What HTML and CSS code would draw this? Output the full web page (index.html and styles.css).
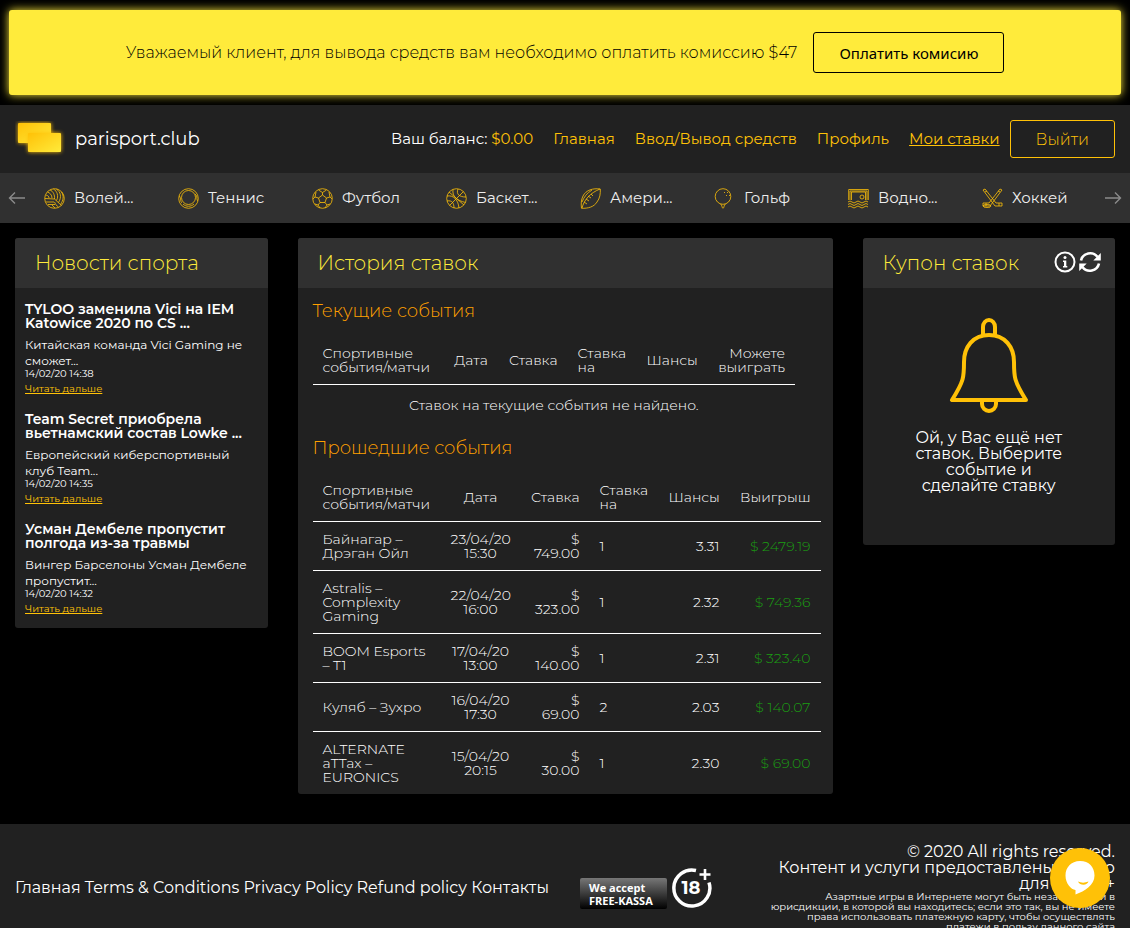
FILE: index.html
```html
<!DOCTYPE html>
<html lang="ru">
  <head>
    <meta charset="UTF-8" />
    <meta name="viewport" content="width=device-width, initial-scale=1.0" />
    <title>parisport.club</title>
    <link rel="stylesheet" href="styles.css">
  </head>
  <body>
    <div class="notice">
      <span class="notice-text">Уважаемый клиент, для вывода средств вам необходимо оплатить комиссию $47</span>
      <button type="button" class="notice-button">Оплатить комисию</button>
    </div>

    <header class="header">
      <a href="#" class="logo">
        <svg width="50" height="36" viewBox="0 0 50 36">
          <defs>
            <linearGradient id="gold" x1="0" y1="0" x2="1" y2="1">
              <stop offset="0" stop-color="#ffc107" />
              <stop offset="1" stop-color="#ffeb3b" />
            </linearGradient>
          </defs>
          <g fill="url(#gold)" class="logo-cards">
            <rect x="3" y="2" width="33" height="20" rx="1" />
            <rect x="13" y="12" width="33" height="19" rx="1" />
          </g>
        </svg>
        <span>parisport.club</span>
      </a>
      <nav class="menu">
        <span class="balance">Ваш баланс: <b>$0.00</b></span>
        <a href="#">Главная</a>
        <a href="#">Ввод/Вывод средств</a>
        <a href="#">Профиль</a>
        <a href="#" class="active">Мои ставки</a>
        <button type="button" class="logout">Выйти</button>
      </nav>
    </header>

    <nav class="sports">
      <button type="button" class="arrow prev" aria-label="Назад">
        <svg width="18" height="14" viewBox="0 0 18 14"><path d="M17 7H1.500M7 1.500L1.500 7l5.500 5.500" /></svg>
      </button>
      <a href="#" class="sport">
        <svg viewBox="0 0 21 21"><circle cx="10.500" cy="10.500" r="9.800" /><path d="M10.500 11L1 10.500M10.500 11l7 6.500M10.500 11C11 7 9 3 6 2M10 14H2M11 16.500H4M8 10C8 7 6 5 3.500 4M5 10C5 8.500 4 7.500 2 7M12.500 12.500C15 8 13 3 9.500 1M14.500 14.500C18 9 16.500 4 12.500 1M16.500 16.500C19.500 12 20 8 17.500 4M10.500 14c1 2 2 4 4 5M8 17c1 1 2 2 3 3" /></svg>
        <span>Волей...</span>
      </a>
      <a href="#" class="sport">
        <svg viewBox="0 0 21 21"><circle cx="10.500" cy="10.500" r="9.800" /><circle cx="10.500" cy="9.500" r="7" /><path d="M1 8c2 0 1 6 3 7M5 16c3 3 8 3 11 0M17 6c3 2 1 6 3 7" /></svg>
        <span>Теннис</span>
      </a>
      <a href="#" class="sport">
        <svg viewBox="0 0 21 21"><circle cx="10.500" cy="10.500" r="9.800" /><path d="M6.500 2l4 2.500 4-2.500M10.500 7l4 3-1.500 4.500H8L6.500 10zM10.500 7V4.500M6.500 10L3 9 1 11M3 9L4 4M14.500 10L18 9l2 2M18 9l-1-5M8 14.500L6 17l-3-1M6 17l2 3M13 14.500l2 2.500 3-1M15 17l-2 3" /></svg>
        <span>Футбол</span>
      </a>
      <a href="#" class="sport">
        <svg viewBox="0 0 21 21"><circle cx="10.500" cy="10.500" r="9.800" /><path d="M3 4l15 13M17.500 3.500L3.500 17.500M7 1.500c-1 7 4 11 12.500 13M1 8c6-1 11 3 12 12M12 1c-2 5 1 8 8 8M1 13c5-1 7 2 7 7" /></svg>
        <span>Баскет...</span>
      </a>
      <a href="#" class="sport">
        <svg viewBox="0 0 21 21"><path d="M20.300 1C13 0 6 2 3 8c-2 4-2 8-1.500 12.300C8 20.500 14 19 17 14c3-4 3.500-8 3.300-13zM2 20C4 12 10 5 20 1M4 14l3 2M6 11l3 2M8 8l3 2M11 6l2 2M2 14c2-5 5-9 10-12" /></svg>
        <span>Амери...</span>
      </a>
      <a href="#" class="sport">
        <svg viewBox="0 0 21 21"><circle cx="9" cy="8.500" r="7.800" /><path d="M6.500 16c2 1 1 4 2.500 4.300 1.500-.300.500-3.300 2.500-4.300M10 4l1 1M13 4l1 1M12 7l1 1M15 7l1 1" /></svg>
        <span>Гольф</span>
      </a>
      <a href="#" class="sport">
        <svg viewBox="0 0 21 21"><path d="M.700 12V1.500h19.600V12M3.500 12V4h14v8M2 12V3h17v9" /><circle cx="14" cy="9" r="2" /><path d="M0 14q2-2 4 0t4 0 4 0 4 0 4 0M0 16.500q2-2 4 0t4 0 4 0 4 0 4 0M0 19q2-2 4 0t4 0 4 0 4 0 4 0" /></svg>
        <span>Водно...</span>
      </a>
      <a href="#" class="sport">
        <svg viewBox="0 0 21 21"><path d="M1 2l2-1 11 14h6v3h-7L1 2zM20 2l-2-1L7 15H1v3h7L20 2zM3 4l2-1M18 4l-2-1M4 15v3M17 15v3" /><ellipse cx="5" cy="18" rx="4" ry="1.500" /></svg>
        <span>Хоккей</span>
      </a>
      <button type="button" class="arrow next" aria-label="Вперёд">
        <svg width="18" height="14" viewBox="0 0 18 14"><path d="M1 7H16.500M11 1.500l5.500 5.500-5.500 5.500" /></svg>
      </button>
    </nav>

    <main class="row">
      <aside class="col-side">
        <section class="panel">
          <div class="panel-head"><h2>Новости спорта</h2></div>
          <div class="news">
            <article class="news-item">
              <h3>TYLOO заменила Vici на IEM Katowice 2020 по CS ...</h3>
              <p>Китайская команда Vici Gaming не сможет...</p>
              <time>14/02/20 14:38</time>
              <a href="#">Читать дальше</a>
            </article>
            <article class="news-item">
              <h3>Team Secret приобрела вьетнамский состав Lowke ...</h3>
              <p>Европейский киберспортивный клуб Team...</p>
              <time>14/02/20 14:35</time>
              <a href="#">Читать дальше</a>
            </article>
            <article class="news-item">
              <h3>Усман Дембеле пропустит полгода из-за травмы</h3>
              <p>Вингер Барселоны Усман Дембеле пропустит...</p>
              <time>14/02/20 14:32</time>
              <a href="#">Читать дальше</a>
            </article>
          </div>
        </section>
      </aside>

      <div class="col-main">
        <section class="panel">
          <div class="panel-head"><h2>История ставок</h2></div>
          <div class="bets">
            <h3>Текущие события</h3>
            <table class="current">
              <thead>
                <tr>
                  <th class="name">Спортивные события/матчи</th>
                  <th class="date">Дата</th>
                  <th class="stake">Ставка</th>
                  <th class="pick">Ставка на</th>
                  <th class="odds">Шансы</th>
                  <th class="win">Можете выиграть</th>
                </tr>
              </thead>
              <tbody>
                <tr><td colspan="6" class="empty">Ставок на текущие события не найдено.</td></tr>
              </tbody>
            </table>

            <h3>Прошедшие события</h3>
            <table class="past">
              <thead>
                <tr>
                  <th class="name">Спортивные события/матчи</th>
                  <th class="date">Дата</th>
                  <th class="stake">Ставка</th>
                  <th class="pick">Ставка на</th>
                  <th class="odds">Шансы</th>
                  <th class="win">Выигрыш</th>
                </tr>
              </thead>
              <tbody>
                <tr>
                  <td class="name">Байнагар – Дрэган Ойл</td>
                  <td class="date">23/04/20 15:30</td>
                  <td class="stake">$ 749.00</td>
                  <td class="pick">1</td>
                  <td class="odds">3.31</td>
                  <td class="win">$ 2479.19</td>
                </tr>
                <tr>
                  <td class="name">Astralis – Complexity Gaming</td>
                  <td class="date">22/04/20 16:00</td>
                  <td class="stake">$ 323.00</td>
                  <td class="pick">1</td>
                  <td class="odds">2.32</td>
                  <td class="win">$ 749.36</td>
                </tr>
                <tr>
                  <td class="name">BOOM Esports – T1</td>
                  <td class="date">17/04/20 13:00</td>
                  <td class="stake">$ 140.00</td>
                  <td class="pick">1</td>
                  <td class="odds">2.31</td>
                  <td class="win">$ 323.40</td>
                </tr>
                <tr>
                  <td class="name">Куляб – Зухро</td>
                  <td class="date">16/04/20 17:30</td>
                  <td class="stake">$<br />69.00</td>
                  <td class="pick">2</td>
                  <td class="odds">2.03</td>
                  <td class="win">$ 140.07</td>
                </tr>
                <tr>
                  <td class="name">ALTERNATE aTTax – EURONICS</td>
                  <td class="date">15/04/20 20:15</td>
                  <td class="stake">$<br />30.00</td>
                  <td class="pick">1</td>
                  <td class="odds">2.30</td>
                  <td class="win">$ 69.00</td>
                </tr>
              </tbody>
            </table>
          </div>
        </section>
      </div>

      <aside class="col-side">
        <section class="panel">
          <div class="panel-head">
            <h2>Купон ставок</h2>
            <div class="tools">
              <button type="button" aria-label="Информация">
                <svg width="22" height="22" viewBox="0 0 22 22">
                  <circle cx="11" cy="11" r="9.500" fill="none" stroke="#fff" stroke-width="2" />
                  <circle cx="11" cy="6.500" r="1.500" fill="#fff" />
                  <path d="M9 9.500h3.300v5.500h1V16.500H9V15h1v-4H9z" fill="#fff" />
                </svg>
              </button>
              <button type="button" aria-label="Обновить">
                <svg width="22" height="22" viewBox="0 0 22 22">
                  <path d="M2 9.500A9.300 9.300 0 0 1 18.500 6M20 12.500A9.300 9.300 0 0 1 3.500 16" fill="none" stroke="#fff" stroke-width="2.600" />
                  <path d="M21.800 2v7.500h-7.500zM.200 20v-7.500h7.500z" fill="#fff" />
                </svg>
              </button>
            </div>
          </div>
          <div class="coupon">
            <svg width="80" height="96" viewBox="0 0 80 96" fill="none" stroke="#ffc107" stroke-width="4" stroke-linejoin="round">
              <path d="M34 17V9a6 7 0 0 1 12 0v8" />
              <path d="M40 17C24 17 15 29 15 44c0 15 0 19-12 38h74C65 63 65 59 65 44 65 29 56 17 40 17z" />
              <path d="M33 83v3a7 7 0 0 0 14 0v-3" />
            </svg>
            <p>Ой, у Вас ещё нет ставок. Выберите событие и сделайте ставку</p>
          </div>
        </section>
      </aside>
    </main>

    <footer class="footer">
      <div class="footer-links">
        <a href="#">Главная</a>
        <a href="#">Terms &amp; Conditions</a>
        <a href="#">Privacy Policy</a>
        <a href="#">Refund policy</a>
        <a href="#">Контакты</a>
      </div>
      <div class="badges">
        <a href="#" class="kassa"><span>We accept</span><span>FREE-KASSA</span></a>
        <svg width="42" height="42" viewBox="0 0 42 42">
          <path d="M25 3.500A18 18 0 1 0 38 15.500" fill="none" stroke="#fff" stroke-width="3.500" />
          <path d="M34 2v11M28.500 7.500h11" stroke="#fff" stroke-width="2.600" />
          <text x="20" y="27" text-anchor="middle" class="age">18</text>
        </svg>
      </div>
      <div class="legal">
        <p>© 2020 All rights reserved.</p>
        <p>Контент и услуги предоставлены только для лиц 18+</p>
        <small>Азартные игры в Интернете могут быть незаконными в юрисдикции, в которой вы находитесь; если это так, вы не имеете права использовать платежную карту, чтобы осуществлять платежи в пользу данного сайта</small>
      </div>
    </footer>

    <button type="button" class="chat" aria-label="Чат">
      <svg width="30" height="34" viewBox="0 0 30 34">
        <path d="M15 0C6 0 .500 6.500.500 14.500S6 28.500 10.500 29v4.500C20 30 29.500 24 29.500 14.500 29.500 6 24 0 15 0z" fill="#fff" />
        <path d="M13 20.500c3 1.500 7 1.500 10.500 0-1 4-8.500 4.500-10.500 0z" fill="#ffc107" />
      </svg>
    </button>
  </body>
</html>
```
FILE: styles.css
```css
* {
  box-sizing: border-box;
}
body {
  margin: 0;
  background-color: #000;
  color: #fff;
  font-family: Montserrat, Inter, "Open Sans", sans-serif;
  font-size: 16px;
  line-height: 16px;
}
h2,
h3,
p {
  margin: 0;
}
a {
  color: #ffc107;
  text-decoration: none;
}
button {
  font-family: inherit;
  cursor: pointer;
}

/* notice */
.notice {
  display: flex;
  align-items: center;
  justify-content: center;
  gap: 16px;
  margin: 10px 9px;
  height: 85px;
  border-radius: 3px;
  background-color: #ffeb3b;
  box-shadow: 0 0 10px #ffeb3b;
  color: #000;
}
.notice-text {
  font-weight: 300;
}
.notice-button {
  height: 41px;
  padding: 0 25px;
  border: 1px solid #000;
  border-radius: 3px;
  background: none;
  color: #000;
  font-family: "Noto Sans", sans-serif;
  font-size: 15px;
}

/* header */
.header {
  position: relative;
  display: flex;
  align-items: center;
  justify-content: space-between;
  height: 68px;
  padding: 0 15px;
  background-color: #212121;
}
.logo {
  display: flex;
  align-items: center;
  gap: 10px;
  color: #fff;
  font-size: 18px;
}
.logo-cards rect {
  filter: drop-shadow(0 0 2px #ffc107);
}
.menu {
  display: flex;
  align-items: center;
  font-size: 15px;
}
.menu a,
.balance {
  padding: 0 10px;
  white-space: nowrap;
}
.balance b {
  color: #ffc107;
  font-weight: 400;
}
.menu .active {
  text-decoration: underline;
}
.logout {
  height: 38px;
  padding: 0 25px;
  border: 1px solid #ffc107;
  border-radius: 3px;
  background: none;
  color: #ffc107;
  font-size: 16px;
  font-weight: 300;
}

/* sports */
.sports {
  display: flex;
  align-items: center;
  height: 50px;
  background-color: #303030;
}
.arrow {
  display: flex;
  border: 0;
  background: none;
}
.prev {
  padding: 0 3px 0 8px;
}
.next {
  padding: 0 8px 0 3px;
}
.arrow svg {
  fill: none;
  stroke: #8a8a8a;
  stroke-width: 1.4;
}
.sport {
  display: flex;
  flex: 1;
  align-items: center;
  gap: 9px;
  padding-left: 15px;
  color: #eee;
  font-size: 15px;
}
.sport svg {
  width: 21px;
  height: 21px;
  fill: none;
  stroke: #ffc107;
  stroke-width: 0.8;
}

/* columns */
.row {
  display: flex;
  align-items: flex-start;
  padding: 15px 0 30px;
}
.col-side,
.col-main {
  width: 25%;
  padding: 0 15px;
}
.col-main {
  width: 50%;
}
.panel {
  border-radius: 3px;
  background-color: #212121;
  overflow: hidden;
}
.panel-head {
  display: flex;
  align-items: center;
  justify-content: space-between;
  height: 50px;
  padding: 0 14px 0 20px;
  background-color: #303030;
}
.panel-head h2 {
  color: #ffeb3b;
  font-size: 20px;
  font-weight: 300;
}

/* news */
.news {
  display: flex;
  flex-direction: column;
  gap: 18px;
  padding: 14px 10px;
}
.news-item h3 {
  margin-bottom: 7px;
  font-size: 14px;
  font-weight: 600;
  line-height: 14px;
}
.news-item p {
  font-size: 12px;
}
.news-item time,
.news-item a {
  display: block;
  font-size: 10px;
  line-height: 10px;
}
.news-item a {
  margin-top: 5px;
  text-decoration: underline;
}

/* bets */
.bets {
  padding: 0 12px 0 15px;
}
.bets h3 {
  padding: 13px 0 15px;
  color: #ffa000;
  font-size: 18px;
  font-weight: 300;
  line-height: 20px;
}
.bets table {
  table-layout: fixed;
  border-collapse: separate;
  border-spacing: 0;
  font-size: 14px;
  line-height: 14px;
}
.current {
  width: 95%;
}
.past {
  width: 100%;
}
th,
td {
  padding: 10px;
  font-weight: 300;
  text-align: left;
}
th,
.past tr:not(:last-child) td {
  border-bottom: 1px solid #fff;
}
.name {
  width: 128px;
}
.date {
  width: 80px;
}
.current .name {
  width: 131px;
}
.current .date {
  width: 55px;
}
.stake,
.pick {
  width: 69px;
}
.odds {
  width: 71px;
}
.bets .date,
.bets .empty {
  text-align: center;
}
.empty {
  padding: 13px 10px;
}
.stake,
.odds,
.win {
  text-align: right;
}
td.win {
  color: #1b9c12;
}

/* coupon */
.tools {
  display: flex;
  gap: 3px;
}
.tools button {
  padding: 0;
  border: 0;
  background: none;
}
.coupon {
  display: flex;
  flex-direction: column;
  align-items: center;
  gap: 16px;
  padding: 30px 50px 51px;
  text-align: center;
}

/* footer */
.footer {
  display: flex;
  align-items: center;
  justify-content: space-between;
  padding: 20px 15px;
  background-color: #212121;
}
.footer-links a {
  color: #fff;
}
.badges {
  display: flex;
  align-items: flex-end;
  gap: 4px;
}
.kassa {
  display: flex;
  flex-direction: column;
  width: 87px;
  height: 31px;
  padding: 3px 9px;
  border-radius: 2px;
  background: linear-gradient(#777, #000);
  color: #fff;
  font: bold 11px/13px "Open Sans", sans-serif;
}
.age {
  fill: #fff;
  font-size: 18px;
  font-weight: 700;
}
.legal {
  width: 371px;
  padding-left: 22px;
  text-align: right;
}
.legal small {
  display: block;
  font-size: 10px;
  line-height: 10px;
}

/* chat */
.chat {
  position: fixed;
  right: 20px;
  bottom: 20px;
  display: flex;
  align-items: center;
  justify-content: center;
  width: 60px;
  height: 60px;
  padding: 0;
  border: 0;
  border-radius: 50%;
  background-color: #ffc107;
}
```
